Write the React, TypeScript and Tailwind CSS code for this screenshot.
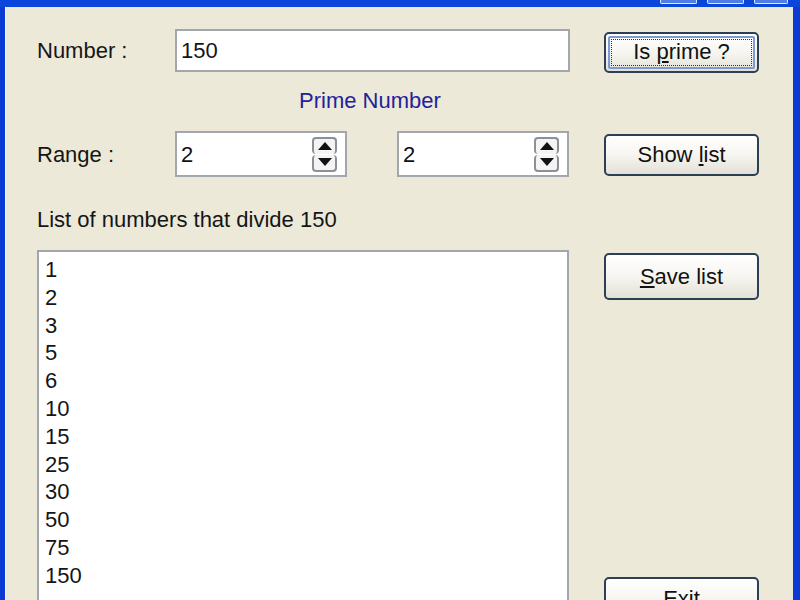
import React from "react";

const font = { fontFamily: '"Liberation Sans", Arial, sans-serif' };

function XPButton({
  children,
  focused = false,
  className = "",
}: {
  children: React.ReactNode;
  focused?: boolean;
  className?: string;
}) {
  return (
    <div
      className={`w-[155px] rounded-[5px] border-2 border-[#2d3f55] bg-gradient-to-b from-[#ffffff] via-[#f6f5f0] to-[#e3e1d6] p-[2px] ${className}`}
    >
      <div
        className={`flex h-full w-full items-center justify-center rounded-[2px] ${
          focused
            ? "border-2 border-[#7d99d6] outline-dotted outline-1 outline-offset-[-4px] outline-[#333]"
            : ""
        }`}
      >
        <span className="text-[22px] leading-none text-[#111]">{children}</span>
      </div>
    </div>
  );
}

function SpinArrows() {
  return (
    <div className="flex flex-col gap-[1px]">
      <div className="flex h-[17px] w-[25px] items-center justify-center rounded-[4px] border-x-2 border-t-2 border-[#8d9096] bg-[#f4f4f4]">
        <svg width="14" height="8" viewBox="0 0 14 8">
          <polygon points="7,0 14,8 0,8" fill="#111" />
        </svg>
      </div>
      <div className="flex h-[17px] w-[25px] items-center justify-center rounded-[4px] border-x-2 border-b-2 border-[#8d9096] bg-[#f4f4f4]">
        <svg width="14" height="8" viewBox="0 0 14 8">
          <polygon points="0,0 14,0 7,8" fill="#111" />
        </svg>
      </div>
    </div>
  );
}

function Spin({ value }: { value: string }) {
  return (
    <div className="flex h-[46px] w-[172px] items-center justify-between border-2 border-[#a3a7ad] bg-white pl-[4px] pr-[8px]">
      <span className="text-[22px] text-[#111]">{value}</span>
      <SpinArrows />
    </div>
  );
}

export default function App() {
  const items = ["1", "2", "3", "5", "6", "10", "15", "25", "30", "50", "75", "150"];
  return (
    <div
      className="flex h-[600px] w-[800px] flex-col overflow-hidden bg-[#0a3bd4]"
      style={font}
    >
      {/* title bar remnant */}
      <div className="flex h-[7px] shrink-0 justify-end gap-[10px] bg-[#0b46dc] pr-[12px]">
        <div className="h-[4px] w-[37px] rounded-b-[2px] border-x border-b border-[#dfe8fb] bg-[#4f7ee6]" />
        <div className="h-[4px] w-[37px] rounded-b-[2px] border-x border-b border-[#dfe8fb] bg-[#4f7ee6]" />
        <div className="h-[4px] w-[34px] rounded-b-[2px] border-x border-b border-[#dfe8fb] bg-[#4f7ee6]" />
      </div>
      <div className="flex min-h-0 flex-1 pl-[5px] pr-[7px]">
        <div className="flex flex-1 flex-col border-l border-[#f7f5ec] bg-[#ece9d8] pl-[31px] text-[22px] text-[#151515]">
          {/* Row 1 */}
          <div className="mt-[22px] flex h-[43px] items-center">
            <div className="w-[138px] text-[22px]">Number :</div>
            <div className="flex h-[43px] w-[395px] items-center border-2 border-[#a3a7ad] bg-white pl-[4px]">
              <span className="text-[22px]">150</span>
            </div>
            <XPButton focused className="ml-[34px] mt-[3px] h-[41px]">
              Is <span className="underline underline-offset-2">p</span>rime ?
            </XPButton>
          </div>
          {/* Row 2 */}
          <div className="mt-[16px] h-[26px] pl-[262px] leading-[26px] text-[#23219c]">
            Prime Number
          </div>
          {/* Row 3 */}
          <div className="mt-[17px] flex h-[46px] items-center">
            <div className="w-[138px]">Range :</div>
            <Spin value="2" />
            <div className="ml-[50px]">
              <Spin value="2" />
            </div>
            <XPButton className="ml-[35px] mt-[2px] h-[42px]">
              Show <span className="underline underline-offset-2">l</span>ist
            </XPButton>
          </div>
          {/* Row 4 */}
          <div className="mt-[30px] h-[26px] leading-[26px]">List of numbers that divide 150</div>
          {/* Row 5 */}
          <div className="mt-[17px] flex min-h-0 flex-1 items-start">
            <div className="h-[380px] w-[532px] border-2 border-[#a3a7ad] bg-white pl-[6px] pt-[4px]">
              {items.map((n) => (
                <div key={n} className="h-[27.8px] leading-[27.8px]">
                  {n}
                </div>
              ))}
            </div>
            <div className="ml-[35px] flex h-[380px] flex-col">
              <XPButton className="mt-[3px] h-[47px]">
                <span className="underline underline-offset-2">S</span>ave list
              </XPButton>
              <XPButton className="mt-[277px] h-[44px]">
                E<span className="underline underline-offset-2">x</span>it
              </XPButton>
            </div>
          </div>
        </div>
      </div>
    </div>
  );
}
